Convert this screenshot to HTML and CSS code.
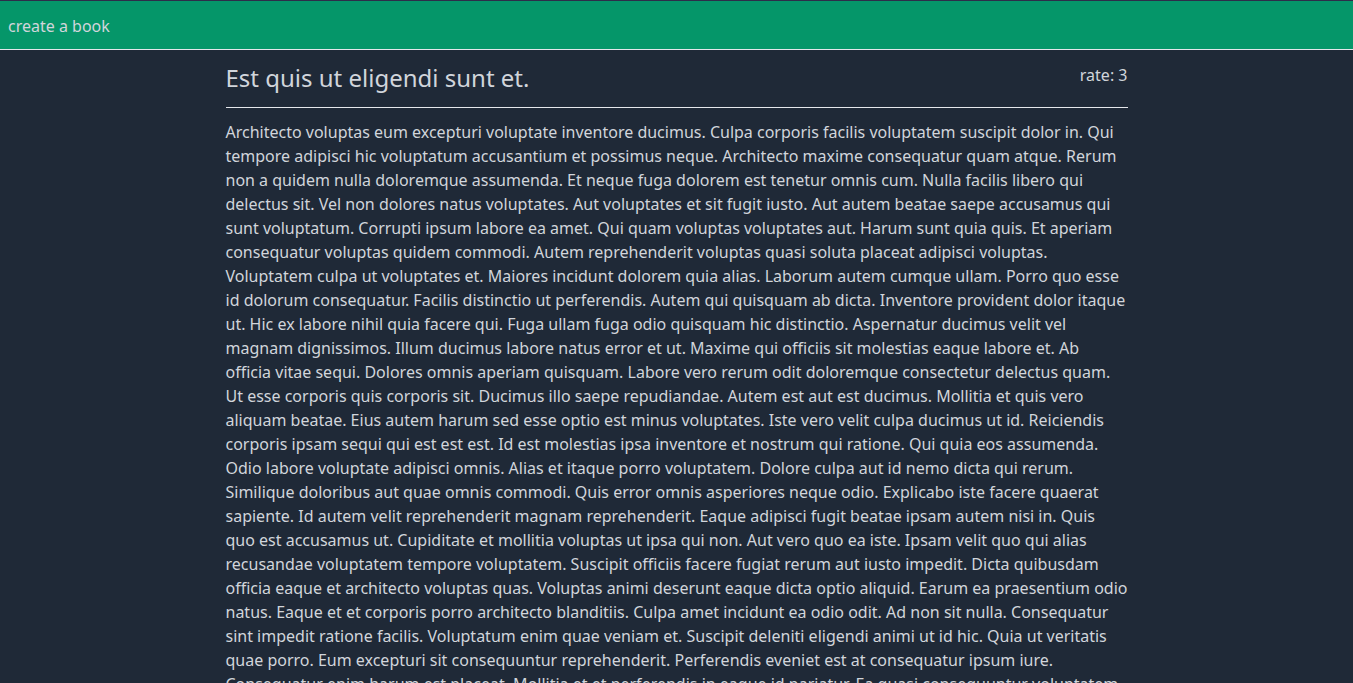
FILE: index.html
```html
<!DOCTYPE html>
<html lang="en">
<head>
<meta charset="utf-8">
<title>Book</title>
<link rel="stylesheet" href="styles.css">
</head>
<body>
<header class="topbar">
  <a class="topbar-link" href="#">create a book</a>
</header>
<main class="book">
  <div class="book-head">
    <h1 class="book-title">Est quis ut eligendi sunt et.</h1>
    <span class="book-rate">rate: 3</span>
  </div>
  <p class="book-body">Architecto voluptas eum excepturi voluptate inventore ducimus. Culpa corporis facilis voluptatem suscipit dolor in. Qui tempore adipisci hic voluptatum accusantium et possimus neque. Architecto maxime consequatur quam atque. Rerum non a quidem nulla doloremque assumenda. Et neque fuga dolorem est tenetur omnis cum. Nulla facilis libero qui delectus sit. Vel non dolores natus voluptates. Aut voluptates et sit fugit iusto. Aut autem beatae saepe accusamus qui sunt voluptatum. Corrupti ipsum labore ea amet. Qui quam voluptas voluptates aut. Harum sunt quia quis. Et aperiam consequatur voluptas quidem commodi. Autem reprehenderit voluptas quasi soluta placeat adipisci voluptas. Voluptatem culpa ut voluptates et. Maiores incidunt dolorem quia alias. Laborum autem cumque ullam. Porro quo esse id dolorum consequatur. Facilis distinctio ut perferendis. Autem qui quisquam ab dicta. Inventore provident dolor itaque ut. Hic ex labore nihil quia facere qui. Fuga ullam fuga odio quisquam hic distinctio. Aspernatur ducimus velit vel magnam dignissimos. Illum ducimus labore natus error et ut. Maxime qui officiis sit molestias eaque labore et. Ab officia vitae sequi. Dolores omnis aperiam quisquam. Labore vero rerum odit doloremque consectetur delectus quam. Ut esse corporis quis corporis sit. Ducimus illo saepe repudiandae. Autem est aut est ducimus. Mollitia et quis vero aliquam beatae. Eius autem harum sed esse optio est minus voluptates. Iste vero velit culpa ducimus ut id. Reiciendis corporis ipsam sequi qui est est est. Id est molestias ipsa inventore et nostrum qui ratione. Qui quia eos assumenda. Odio labore voluptate adipisci omnis. Alias et itaque porro voluptatem. Dolore culpa aut id nemo dicta qui rerum. Similique doloribus aut quae omnis commodi. Quis error omnis asperiores neque odio. Explicabo iste facere quaerat sapiente. Id autem velit reprehenderit magnam reprehenderit. Eaque adipisci fugit beatae ipsam autem nisi in. Quis quo est accusamus ut. Cupiditate et mollitia voluptas ut ipsa qui non. Aut vero quo ea iste. Ipsam velit quo qui alias recusandae voluptatem tempore voluptatem. Suscipit officiis facere fugiat rerum aut iusto impedit. Dicta quibusdam officia eaque et architecto voluptas quas. Voluptas animi deserunt eaque dicta optio aliquid. Earum ea praesentium odio natus. Eaque et et corporis porro architecto blanditiis. Culpa amet incidunt ea odio odit. Ad non sit nulla. Consequatur sint impedit ratione facilis. Voluptatum enim quae veniam et. Suscipit deleniti eligendi animi ut id hic. Quia ut veritatis quae porro. Eum excepturi sit consequuntur reprehenderit. Perferendis eveniet est at consequatur ipsum iure. Consequatur enim harum est placeat. Mollitia et et perferendis in eaque id pariatur. Ea quasi consequuntur voluptatem aut. Quo ut dolorem et sit. Nihil et voluptas ut ipsum. Dolorem aut quia est quas nihil.</p>
</main>
</body>
</html>
```
FILE: styles.css
```css
* { box-sizing: border-box; }
html, body {
  margin: 0;
  padding: 0;
}
body {
  background: #1f2937;
  color: #d1d5db;
  font-family: "Noto Sans", "Open Sans", sans-serif;
  font-size: 16px;
  line-height: 24px;
  border-top: 1px solid #2d2d4a;
}
.topbar {
  background: #059669;
  height: 49px;
  border-bottom: 1px solid #e5e7eb;
  display: flex;
  align-items: center;
  padding: 2px 8px 0;
}
.topbar-link {
  color: #d1d5db;
  text-decoration: none;
  font-size: 16px;
}
.book {
  width: 902px;
  margin: 0 auto;
  padding-top: 12px;
}
.book-head {
  display: flex;
  justify-content: space-between;
  align-items: flex-start;
  border-bottom: 1px solid #e5e7eb;
  padding-bottom: 13px;
}
.book-title {
  margin: 0;
  font-size: 24px;
  line-height: 32px;
  font-weight: 400;
}
.book-rate {
  font-size: 16px;
  line-height: 24px;
  margin-top: 1px;
}
.book-body {
  margin: 12px 0 0;
}
```
